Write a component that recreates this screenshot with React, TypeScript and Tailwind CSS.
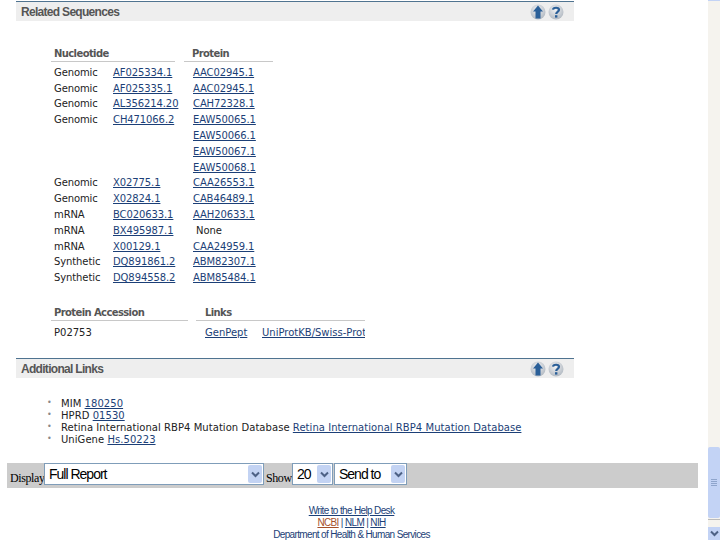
const rows: [string, string, string][] = [
  ["Genomic", "AF025334.1", "AAC02945.1"],
  ["Genomic", "AF025335.1", "AAC02945.1"],
  ["Genomic", "AL356214.20", "CAH72328.1"],
  ["Genomic", "CH471066.2", "EAW50065.1"],
  ["", "", "EAW50066.1"],
  ["", "", "EAW50067.1"],
  ["", "", "EAW50068.1"],
  ["Genomic", "X02775.1", "CAA26553.1"],
  ["Genomic", "X02824.1", "CAB46489.1"],
  ["mRNA", "BC020633.1", "AAH20633.1"],
  ["mRNA", "BX495987.1", "None"],
  ["mRNA", "X00129.1", "CAA24959.1"],
  ["Synthetic", "DQ891861.2", "ABM82307.1"],
  ["Synthetic", "DQ894558.2", "ABM85484.1"],
];

const link = "text-[#1c3f77] underline";

function Defs() {
  return (
    <defs>
      <radialGradient id="ball" cx="45%" cy="35%" r="70%">
        <stop offset="0%" stopColor="#f0f1f3" />
        <stop offset="100%" stopColor="#aeb6bf" />
      </radialGradient>
    </defs>
  );
}

function UpIcon() {
  return (
    <svg width="16" height="16" viewBox="0 0 16 16">
      <Defs />
      <circle cx="8" cy="8" r="7.5" fill="url(#ball)" />
      <path d="M8 1.5 L13 7.5 H10.5 V14.5 H5.5 V7.5 H3 Z" fill="#2a5f98" />
    </svg>
  );
}

function HelpIcon() {
  return (
    <svg width="16" height="16" viewBox="0 0 16 16">
      <Defs />
      <circle cx="8" cy="8" r="7.5" fill="url(#ball)" />
      <path d="M5 5.6 C5.2 3.4 11 2.8 11 5.8 C11 8 8.2 7.8 8.2 10" fill="none" stroke="#2a5f98" strokeWidth="2.2" />
      <rect x="7" y="11.2" width="2.4" height="2.4" fill="#2a5f98" />
    </svg>
  );
}

function SectionHeader({ title }: { title: string }) {
  return (
    <div className="ml-4 flex h-[20px] w-[558px] items-center justify-between border-t border-[#4f7390] bg-[#eeeeee] pl-[5px] pr-[10px] font-['Liberation_Sans',sans-serif] text-[12px] font-bold tracking-[-0.7px] text-[#555555]">
      <span>{title}</span>
      <div className="flex gap-[2px]">
        <UpIcon />
        <HelpIcon />
      </div>
    </div>
  );
}

function Chevron() {
  return (
    <div className="flex h-[18px] w-[14px] items-center justify-center rounded-[2px] bg-[#c3d3f3]">
      <svg width="9" height="7" viewBox="0 0 9 7">
        <path d="M1 1.5 L4.5 5 L8 1.5" fill="none" stroke="#4d6185" strokeWidth="2" />
      </svg>
    </div>
  );
}

function Select({ label, width }: { label: string; width: string }) {
  return (
    <div className={`${width} flex h-[22px] items-center justify-between border border-[#7f9db9] bg-white pl-[4px] pr-[1px] font-['Liberation_Sans',sans-serif] text-[14px] tracking-[-1px] text-black`}>
      <span>{label}</span>
      <Chevron />
    </div>
  );
}

export default function App() {
  return (
    <div className="flex h-[540px] w-[720px] overflow-hidden bg-white font-['DejaVu_Sans',sans-serif] text-[10px] text-[#222222]">
      <main className="w-[708px] shrink-0 pt-px">
        <SectionHeader title="Related Sequences" />

        <div className="ml-[51px] mt-[25px] grid w-[222px] grid-cols-[124px_89px] gap-x-[9px] tracking-[-0.6px]">
          <div className="flex h-[16px] items-center border-b border-[#c8c8c8] pl-[3px] font-bold text-[#555555]">Nucleotide</div>
          <div className="flex h-[16px] items-center border-b border-[#c8c8c8] pl-[8px] font-bold text-[#555555]">Protein</div>
        </div>
        <div className="ml-[54px] mt-[2.4px] flex flex-col tracking-[-0.1px]">
          {rows.map(([type, nuc, prot], i) => (
            <div key={i} className="grid h-[15.8px] grid-cols-[59px_80px_80px] items-center whitespace-nowrap">
              <span>{type}</span>
              <span className={link}>{nuc}</span>
              {prot === "None" ? <span className="pl-[3px]">None</span> : <span className={link}>{prot}</span>}
            </div>
          ))}
        </div>

        <div className="ml-[51px] mt-[18.6px] grid w-[314px] grid-cols-[137px_169px] gap-x-[8px] tracking-[-0.6px]">
          <div className="flex h-[17px] items-center border-b border-[#c8c8c8] pl-[3px] font-bold text-[#555555]">Protein Accession</div>
          <div className="flex h-[17px] items-center border-b border-[#c8c8c8] pl-[9px] font-bold text-[#555555]">Links</div>
        </div>
        <div className="ml-[54px] mt-[3px] grid h-[16px] w-[311px] grid-cols-[151px_57px_103px] items-center overflow-hidden whitespace-nowrap">
          <span>P02753</span>
          <span className={link}>GenPept</span>
          <span className={`${link} overflow-hidden`}>UniProtKB/Swiss-Prot</span>
        </div>

        <div className="mt-[18px]">
          <SectionHeader title="Additional Links" />
        </div>

        <ul className="ml-[47px] mt-[19px] flex flex-col tracking-[0.05px]">
          {[
            ["MIM", "180250"],
            ["HPRD", "01530"],
            ["Retina International RBP4 Mutation Database", "Retina International RBP4 Mutation Database"],
            ["UniGene", "Hs.50223"],
          ].map(([label, target]) => (
            <li key={label} className="flex h-[12px] items-center whitespace-nowrap">
              <span className="w-[14px] text-[8px] text-[#888888]">•</span>
              <span>
                {label} <span className={link}>{target}</span>
              </span>
            </li>
          ))}
        </ul>

        <div className="ml-[7px] mt-[18px] flex h-[25px] w-[691px] items-start gap-[2px] bg-[#cccccc] pl-[3px] font-['Liberation_Serif',serif] text-[12px] tracking-[-0.4px] text-black">
          <span className="w-[32px] pt-[6px]">Display</span>
          <Select label="Full Report" width="w-[220px]" />
          <span className="w-[24px] pt-[6px] text-center">Show</span>
          <Select label="20" width="w-[41px]" />
          <div className="-ml-px">
            <Select label="Send to" width="w-[73px]" />
          </div>
        </div>

        <footer className="mt-[17px] flex w-[703px] flex-col items-center font-['Liberation_Sans',sans-serif] text-[10px] leading-[12px] tracking-[-0.65px] text-[#1c3f77]">
          <span className="underline">Write to the Help Desk</span>
          <span>
            <span className="text-[#a5502b] underline">NCBI</span> | <span className="underline">NLM</span> | <span className="underline">NIH</span>
          </span>
          <span>Department of Health &amp; Human Services</span>
        </footer>
      </main>

      <aside className="flex w-[12px] shrink-0 flex-col border-t border-[#c3d3f5] bg-[#f5f3ee]">
        <div className="mt-[446px] flex h-[71px] items-center justify-center rounded-[2px] bg-[#c3d3f5]">
          <div className="flex w-[6px] flex-col gap-px">
            <div className="h-px bg-[#8fa5cc]" />
            <div className="h-px bg-[#8fa5cc]" />
            <div className="h-px bg-[#8fa5cc]" />
            <div className="h-px bg-[#8fa5cc]" />
          </div>
        </div>
        <div className="mt-px h-px bg-[#bbbbbb]" />
        <div className="mt-[7px] flex h-[13px] items-center justify-center bg-[#c3d3f5]">
          <svg width="9" height="7" viewBox="0 0 9 7">
            <path d="M1 1.5 L4.5 5 L8 1.5" fill="none" stroke="#4d6185" strokeWidth="2" />
          </svg>
        </div>
      </aside>
    </div>
  );
}
